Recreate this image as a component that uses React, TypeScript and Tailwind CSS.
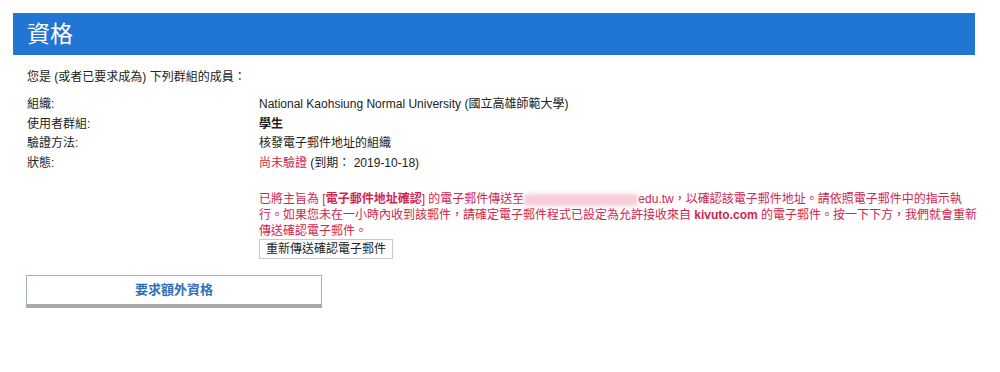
export default function App() {
  const rows: { label: string; value: React.ReactNode }[] = [
    { label: "組織:", value: "National Kaohsiung Normal University (國立高雄師範大學)" },
    { label: "使用者群組:", value: <span className="font-bold">學生</span> },
    { label: "驗證方法:", value: "核發電子郵件地址的組織" },
    {
      label: "狀態:",
      value: (
        <>
          <span className="text-[#d0264e]">尚未驗證</span> (到期： 2019-10-18)
        </>
      ),
    },
  ];

  return (
    <div
      className="w-[1000px] h-[372px] bg-white text-[#222] text-[12px] pt-[13px] pl-[13px]"
      style={{ fontFamily: '"Liberation Sans", "Noto Sans CJK TC", sans-serif' }}
    >
      <div className="w-[962px] h-[42px] bg-[#2176d4] flex items-center pl-[14px]">
        <h1 className="text-white text-[23px] leading-none">資格</h1>
      </div>

      <div className="pl-[14px] pt-[13px]">
        <p className="leading-[18px]">您是 (或者已要求成為) 下列群組的成員：</p>

        <div className="mt-[9px] flex flex-col">
          {rows.map((r) => (
            <div key={r.label} className="flex leading-[19.5px]">
              <div className="w-[232px]">{r.label}</div>
              <div>{r.value}</div>
            </div>
          ))}
        </div>

        <div className="ml-[232px] mt-[18px] w-[720px] flex flex-col items-start">
          <p className="text-[#d0264e] leading-[16px]">
            已將主旨為 [<span className="font-bold">電子郵件地址確認</span>] 的電子郵件傳送至
            <span className="inline-block align-middle w-[114px] h-[12px] bg-[#f4cdd7] blur-[2px]" />
            edu.tw，以確認該電子郵件地址。請依照電子郵件中的指示執
            <br />
            行。如果您未在一小時內收到該郵件，請確定電子郵件程式已設定為允許接收來自{" "}
            <span className="font-bold">kivuto.com</span> 的電子郵件。按一下下方，我們就會重新
            <br />
            傳送確認電子郵件。
          </p>
          <button className="block h-[20px] px-[6px] border border-[#c8c8c8] bg-white text-[#222] text-[12px] leading-none">
            重新傳送確認電子郵件
          </button>
        </div>

        <button className="block mt-[16px] -ml-[1px] w-[296px] h-[33px] bg-white border border-[#9db3c8] border-b-[4px] border-b-[#aaaaaa] text-[#2f6fb8] font-bold text-[13px]">
          要求額外資格
        </button>
      </div>
    </div>
  );
}
